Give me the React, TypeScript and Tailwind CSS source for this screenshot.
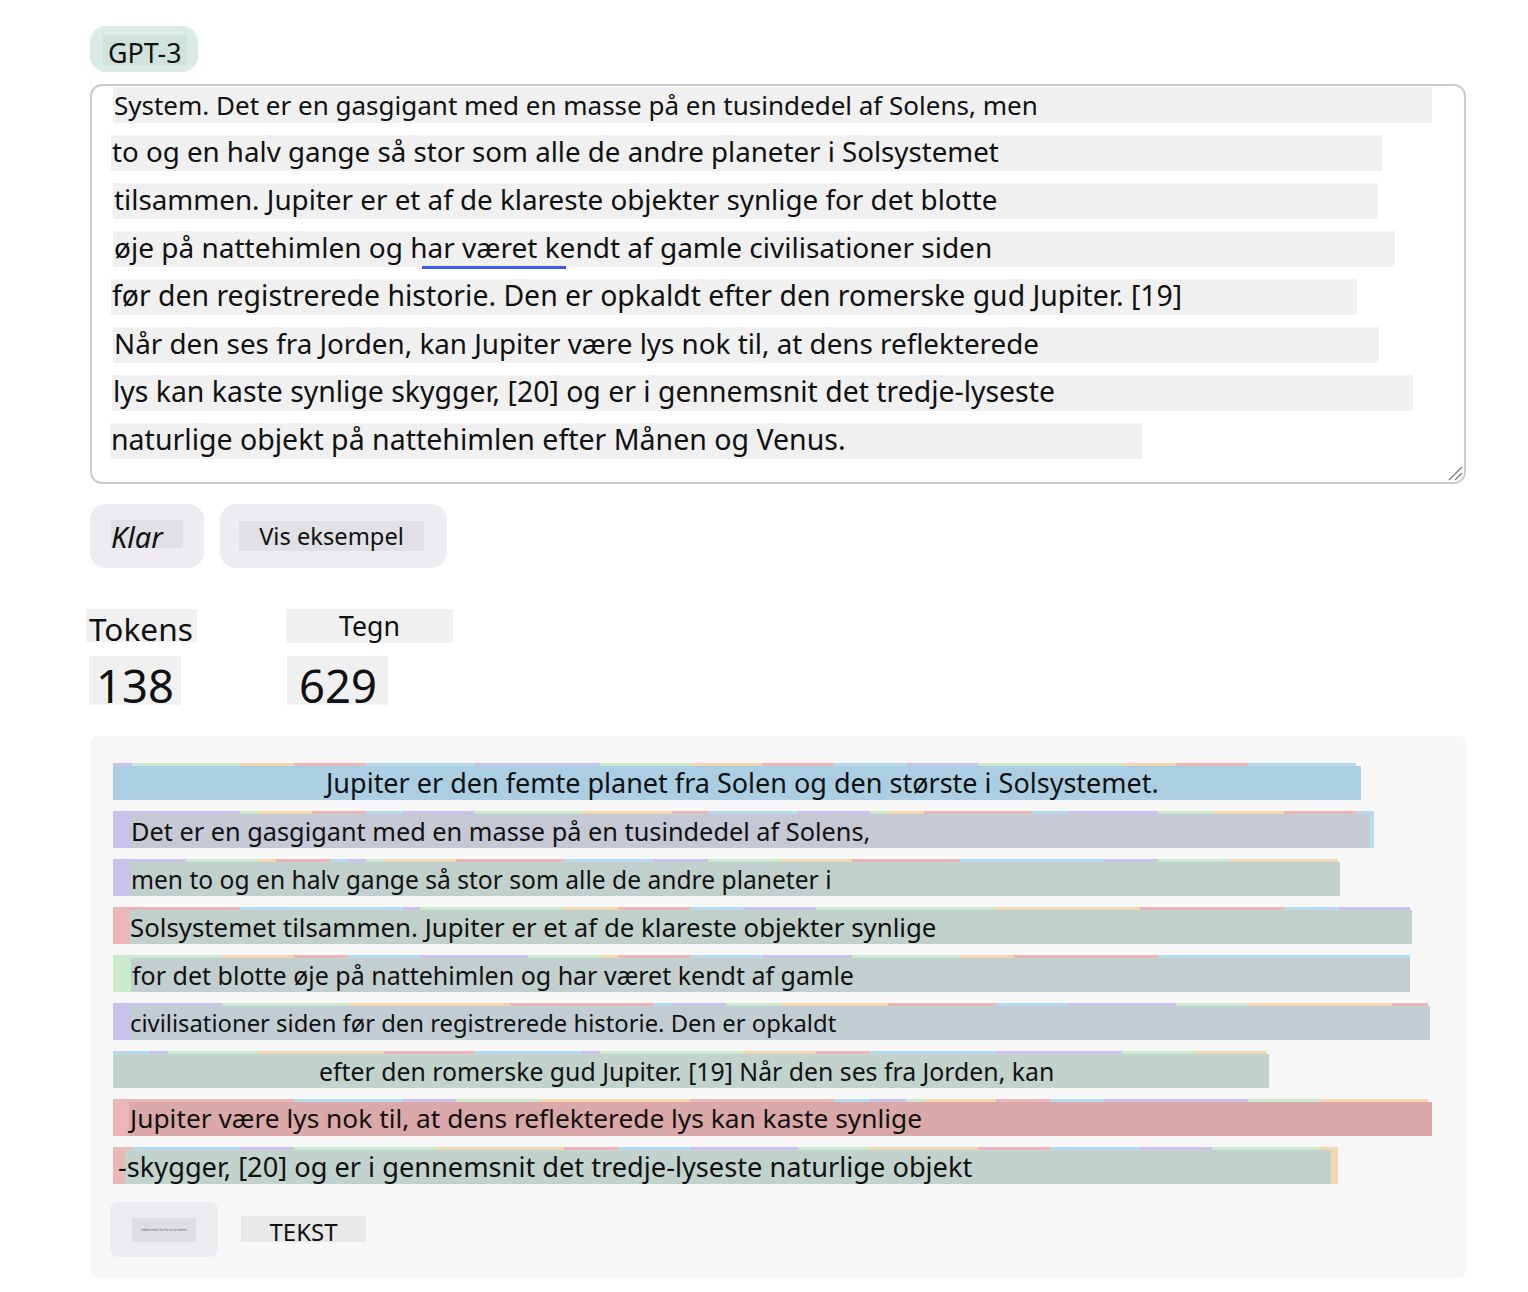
import React from "react";

type Seg = [number, string];

const C: Record<string, string> = {
  P: "bg-[#cac2ec]",
  G: "bg-[#cbe9cb]",
  O: "bg-[#f2d8b1]",
  R: "bg-[#ecb6b6]",
  B: "bg-[#b6daf0]",
};

type Row = {
  segs: string;
  ol: number;
  or: number;
  bg: string;
  text: string;
  font: string;
  pad: string;
};

const rows: Row[] = [
  {
    segs: "P132 G240 O294 R366 B474 P600 G690 O762 R834 B906 P978 G1122 O1176 R1248 B1356",
    ol: 113,
    or: 1361,
    bg: "bg-[#abcee2]",
    text: "Jupiter er den femte planet fra Solen og den største i Solsystemet.",
    font: "text-[27px] leading-[34px]",
    pad: "pl-[213px]",
  },
  {
    segs: "P240 G258 O312 R366 B402 P474 G582 O672 R708 B798 P870 G888 O924 R1032 B1068 P1158 G1212 O1284 R1356 B1374",
    ol: 130,
    or: 1370,
    bg: "bg-[#c5c9d3]",
    text: "Det er en gasgigant med en masse på en tusindedel af Solens,",
    font: "text-[25.3px] leading-[34.5px]",
    pad: "pl-px",
  },
  {
    segs: "P186 G258 O276 R330 B348 P366 G384 O456 R564 B654 P708 G780 O852 R960 B1104 P1158 G1230 O1338",
    ol: 130,
    or: 1340,
    bg: "bg-[#c1cfcd]",
    text: "men to og en halv gange så stor som alle de andre planeter i",
    font: "text-[24.6px] leading-[35px]",
    pad: "pl-px",
  },
  {
    segs: "R240 B402 P420 G564 O618 R690 B744 P816 G996 O1140 R1284 B1338 P1410",
    ol: 130,
    or: 1412,
    bg: "bg-[#c1d0cb]",
    text: "Solsystemet tilsammen. Jupiter er et af de klareste objekter synlige",
    font: "text-[25.8px] leading-[34px]",
    pad: "pl-0",
  },
  {
    segs: "G222 O294 R348 B420 P528 G600 O618 R690 B762 P852 G960 O1014 R1158 B1410",
    ol: 131,
    or: 1410,
    bg: "bg-[#c2cfce]",
    text: "for det blotte øje på nattehimlen og har været kendt af gamle",
    font: "text-[25px] leading-[34.6px]",
    pad: "pl-px",
  },
  {
    segs: "P222 G348 O510 R654 B672 P726 G780 O888 R996 B1068 P1176 G1248 O1392 R1428",
    ol: 130,
    or: 1430,
    bg: "bg-[#c2cdd3]",
    text: "civilisationer siden før den registrerede historie. Den er opkaldt",
    font: "text-[23.8px] leading-[34px]",
    pad: "pl-0",
  },
  {
    segs: "B150 P168 G258 O384 R474 B582 P600 G744 O816 R870 B996 P1122 G1194 O1266",
    ol: 114,
    or: 1269,
    bg: "bg-[#c2d2cc]",
    text: "efter den romerske gud Jupiter. [19] Når den ses fra Jorden, kan",
    font: "text-[24.8px] leading-[34px]",
    pad: "pl-[205px]",
  },
  {
    segs: "R294 B402 P456 G540 O690 R834 B870 P906 G924 O996 R1050 B1104 P1248 G1320 O1428",
    ol: 129,
    or: 1432,
    bg: "bg-[#daa8a8]",
    text: "Jupiter være lys nok til, at dens reflekterede lys kan kaste synlige",
    font: "text-[26.3px] leading-[33.6px]",
    pad: "pl-px",
  },
  {
    segs: "R132 B240 P294 G438 O564 R618 B690 P798 G870 O978 R1050 B1140 P1212 G1320 O1338",
    ol: 125,
    or: 1331,
    bg: "bg-[#c2d2cd]",
    text: "-skygger, [20] og er i gennemsnit det tredje-lyseste naturlige objekt",
    font: "text-[27.2px] leading-[34.2px]",
    pad: "-ml-[7px]",
  },
];

const X0 = 113;

function parseSegs(s: string): Seg[] {
  return s.split(" ").map((t) => [parseInt(t.slice(1), 10), t[0]] as Seg);
}

function TokenRow({ row }: { row: Row }) {
  const segs = parseSegs(row.segs);
  let prev = X0;
  return (
    <div className="relative h-[37px] flex">
      {segs.map(([end, c], i) => {
        const w = end - prev;
        prev = end;
        return <div key={i} className={`h-full ${C[c]}`} style={{ width: w }} />;
      })}
      <div
        className={`absolute top-[3px] bottom-0 ${row.bg} flex items-start`}
        style={{ left: row.ol - X0, width: row.or - row.ol }}
      >
        <span className={`${row.font} ${row.pad} whitespace-nowrap`}>{row.text}</span>
      </div>
    </div>
  );
}

const lines: { left: number; right: number; text: string; font: string; underline?: boolean }[] = [
  { left: 113, right: 1432, font: "text-[26px] leading-[37px]", text: "System. Det er en gasgigant med en masse på en tusindedel af Solens, men" },
  { left: 111, right: 1382, font: "text-[27.7px] leading-[32.5px]", text: "to og en halv gange så stor som alle de andre planeter i Solsystemet" },
  { left: 113, right: 1378, font: "text-[27.8px] leading-[32.5px]", text: "tilsammen. Jupiter er et af de klareste objekter synlige for det blotte" },
  { left: 113, right: 1395, font: "text-[28px] leading-[32.5px]", text: "øje på nattehimlen og har været kendt af gamle civilisationer siden", underline: true },
  { left: 111, right: 1357, font: "text-[28.4px] leading-[32.5px]", text: "før den registrerede historie. Den er opkaldt efter den romerske gud Jupiter. [19]" },
  { left: 113, right: 1379, font: "text-[27.8px] leading-[32.5px]", text: "Når den ses fra Jorden, kan Jupiter være lys nok til, at dens reflekterede" },
  { left: 112, right: 1413, font: "text-[28.4px] leading-[32.5px]", text: "lys kan kaste synlige skygger, [20] og er i gennemsnit det tredje-lyseste" },
  { left: 110, right: 1142, font: "text-[28.5px] leading-[32.5px]", text: "naturlige objekt på nattehimlen efter Månen og Venus." },
];

export default function App() {
  return (
    <div className="w-[1528px] min-h-[1292px] bg-white font-['Noto_Sans',sans-serif] text-[#111] pt-[26px] pl-[90px]">
      <div className="w-[1376px] flex flex-col">
        {/* Model pill */}
        <div className="w-[108px] h-[46px] rounded-[16px] bg-[#dbebe5] pl-[13px] pt-[9px]">
          <div className="w-[84px] h-[30px] bg-[#cfe3dc] pl-[5px] text-[26.8px] leading-[35px] whitespace-nowrap">GPT-3</div>
        </div>

        {/* Textarea */}
        <div className="relative mt-[12px] h-[400px] border-2 border-[#cac9d6] rounded-[12px] pt-px flex flex-col gap-[12px]">
          {lines.map((l, i) => (
            <div
              key={i}
              className={`relative h-[36px] bg-[#f0f0f0] ${l.font} whitespace-nowrap pl-px`}
              style={{ marginLeft: l.left - 92, width: l.right - l.left }}
            >
              {l.text}
              {l.underline && <div className="absolute left-[309px] top-[35px] w-[144px] h-[3px] bg-[#3a5cf0]" />}
            </div>
          ))}
          <svg className="absolute right-[1px] bottom-[1px]" width="16" height="16" viewBox="0 0 16 16">
            <line x1="2" y1="15" x2="15" y2="2" stroke="#777" strokeWidth="1.2" />
            <line x1="8" y1="15" x2="15" y2="8" stroke="#777" strokeWidth="1.2" />
          </svg>
        </div>

        {/* Buttons */}
        <div className="mt-[20px] flex gap-[16px]">
          <div className="w-[114px] h-[64px] rounded-[16px] bg-[#ededf1] pl-[21px] pt-[16px]">
            <div className="w-[72px] h-[28px] bg-[#e0e0e5] text-[29px] italic leading-[34px] whitespace-nowrap">Klar</div>
          </div>
          <div className="w-[227px] h-[64px] rounded-[16px] bg-[#ededf1] pl-[19px] pt-[17px]">
            <div className="w-[185px] h-[30px] bg-[#e0e0e5] text-[23.7px] leading-[31.5px] text-center whitespace-nowrap">Vis eksempel</div>
          </div>
        </div>

        {/* Stats */}
        <div className="mt-[41px] flex">
          <div className="w-[196px] flex flex-col">
            <div className="-ml-[4px] w-[111px] h-[33px] bg-[#f0f0f0] pl-[3px] text-[31.6px] leading-[39.4px] whitespace-nowrap">Tokens</div>
            <div className="mt-[14px] -ml-[1px] w-[92px] h-[49px] bg-[#f0f0f0] pl-[7px] text-[45.4px] leading-[59.5px]">138</div>
          </div>
          <div className="flex flex-col">
            <div className="w-[167px] h-[34px] bg-[#f0f0f0] text-center text-[26.7px] leading-[33.4px]">Tegn</div>
            <div className="mt-[13px] ml-px w-[101px] h-[49px] bg-[#f0f0f0] pl-[12px] text-[45.4px] leading-[59.5px]">629</div>
          </div>
        </div>

        {/* Token panel */}
        <div className="mt-[31px] h-[542px] bg-[#f7f7f7] rounded-[8px] pt-[27px] pl-[23px] flex flex-col">
          <div className="flex flex-col gap-[11px]">
            {rows.map((r, i) => (
              <TokenRow key={i} row={r} />
            ))}
          </div>
          <div className="mt-[18px] flex items-start">
            <div className="-ml-[3px] w-[108px] h-[55px] rounded-[8px] bg-[#ececf0] pl-[22px] pt-[16px]">
              <div className="w-[64px] h-[24px] bg-[#dedee2] flex items-center justify-center text-[3px] leading-[3px] text-[#555] whitespace-nowrap overflow-hidden">
                indtast tekst her for at se tokens
              </div>
            </div>
            <div className="ml-[23px] mt-[14px] w-[125px] h-[26px] bg-[#e8e8e8] text-center text-[24px] leading-[31.3px] whitespace-nowrap">TEKST</div>
          </div>
        </div>
      </div>
    </div>
  );
}
